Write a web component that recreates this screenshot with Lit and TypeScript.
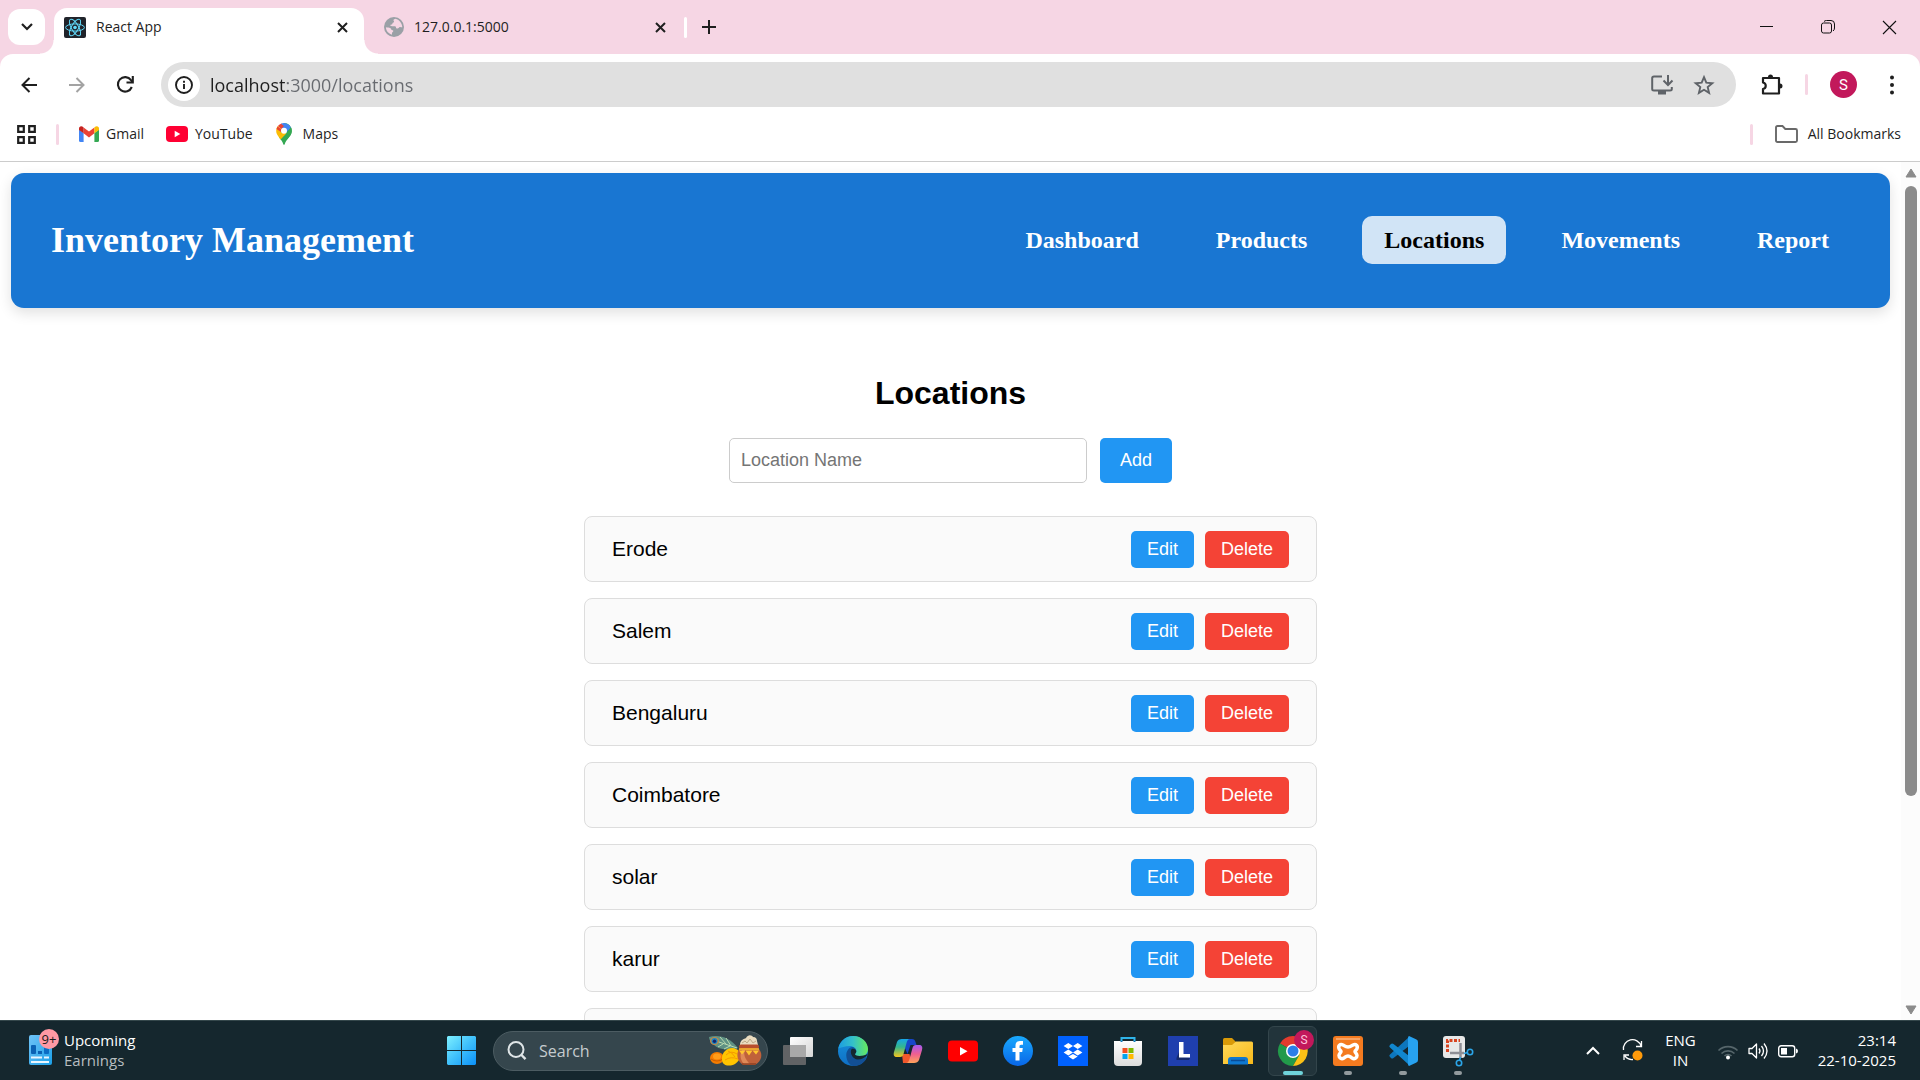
import { LitElement, html, css, svg, nothing } from "lit";
import { customElement, property, state } from "lit/decorators.js";
import { classMap } from "lit/directives/class-map.js";

const icon = (w: number, h: number, body: unknown, box = `0 0 ${w} ${h}`) =>
  html`<svg width=${w} height=${h} viewBox=${box} fill="none" aria-hidden="true">${body}</svg>`;

const closeIcon = icon(11, 11, svg`<path d="M1 1l9 9M10 1l-9 9" stroke="#1f1f1f" stroke-width="2"/>`);

const reactIcon = icon(22, 21, svg`
  <rect width="22" height="21" rx="2" fill="#20232a"/>
  <g stroke="#61dafb" stroke-width="1">
    <ellipse cx="11" cy="10.5" rx="9.4" ry="3.6"/>
    <ellipse cx="11" cy="10.5" rx="9.4" ry="3.6" transform="rotate(60 11 10.5)"/>
    <ellipse cx="11" cy="10.5" rx="9.4" ry="3.6" transform="rotate(120 11 10.5)"/>
  </g><circle cx="11" cy="10.5" r="1.8" fill="#61dafb"/>`);

const globeIcon = icon(20, 20, svg`
  <circle cx="10" cy="10" r="10" fill="#9aa0a6"/>
  <path d="M11.5 1.8c-2.2.3-2.4 1.6-1.6 2.4.5.7-.2 1.4-1 1.5-.6.2-.3 1.1-.8 1.6-.6.5-1.6.2-1.7 1 0 .7.7.9 1.5.9h3c1 0 1.100.9 1.100 1.600 0 .9 1.400.6 2.100.4.8-.1.8-1 1.700-1.200.9-.2 1.800.5 2.500.2-.2-4-3.200-7.700-6.800-8.400zM1.900 10.300c1.300.2 3.300.2 4.600.900 1 .6.5 1.500 1.300 1.800.8.2 1.500.2 1.500 1 0 .900-1 .900-1.200 1.700-.2.800-.2 1.400-.1 2-3.400-.9-6-3.900-6.100-7.400z" fill="#f6d6e4"/>`);

const gmailIcon = icon(20, 16, svg`
  <path d="M0 3.500V14.500Q0 16 1.500 16H4.600V7z" fill="#4285f4"/>
  <path d="M20 3.500V14.500Q20 16 18.500 16H15.400V7z" fill="#34a853"/>
  <path d="M4.600 1.500L10 5.600l5.400-4.100v5.800L10 11.400 4.600 7.300z" fill="#ea4335"/>
  <path d="M0 2.600C0 .3 2.500-.7 4.600 1.500v5.800L0 4z" fill="#c5221f"/>
  <path d="M20 2.600C20 .3 17.500-.7 15.400 1.500v5.800L20 4z" fill="#fbbc04"/>`);

const youtubeSmall = icon(22, 16, svg`
  <rect width="22" height="16" rx="4" fill="#ff0033"/><path d="M8.700 4.800v6.400l5.600-3.200z" fill="#fff"/>`);

const mapsIcon = icon(16, 22, svg`
  <path d="M8 0a7.800 7.800 0 0 1 7.800 8c0 2.700-1.300 4.500-2.900 6.500C11 17 9.300 18.500 8.700 21.300c-.2.700-1.200.7-1.400 0C6.700 18.500 5 17 3.100 14.500z" fill="#34a853"/>
  <path d="M2.400 13.500C1 11.600.2 10 .2 8c0-1.900.6-3.500 1.700-4.900L5.800 6.300a3 3 0 0 0 .5 4.100z" fill="#fbbc04"/>
  <path d="M6 10L12.300 1.500 15 4.700 9.500 10.500z" fill="#4285f4"/>
  <path d="M5.600 6.200L1.900 3.100A7.800 7.800 0 0 1 5.600.6l3.900 3.200z" fill="#ea4335"/>
  <path d="M5 .700A7.800 7.800 0 0 1 14.600 3.900L10.500 8.500 5.600 5.500 8 3z" fill="#4285f4"/>
  <path d="M10.200 10.300l4.700-6c1.400 2.700 1.100 5.500-.6 8.200L9.500 18 4.500 16l1.500-2z" fill="#34a853"/>
  <path d="M10.500 10.200L4.600 16.400 2.400 13.500 6 9.600z" fill="#fbbc04"/>
  <path d="M5.600 6.500L1.600 3.500A7.800 7.800 0 0 0 .5 6l4.500 3z" fill="#ea4335"/>
  <circle cx="8" cy="7.800" r="3" fill="#fff"/>`);

const widgetIcon = icon(32, 46, svg`
  <defs><linearGradient id="wg" x2="1" y2="1"><stop stop-color="#6fc3f7"/><stop offset="1" stop-color="#1ba0e8"/></linearGradient></defs>
  <rect x="0" y="7" width="23" height="30" rx="2" fill="url(#wg)"/>
  <rect x="2" y="17" width="5" height="9" rx="1" fill="#0a62b4"/><rect x="9" y="23" width="4" height="3" fill="#0a62b4"/>
  <rect x="15" y="18" width="5" height="8" rx="1" fill="#0b6dc4"/>
  <path d="M2 29.500h11M15 29.500h5M2 34h18" stroke="#e9f6ff" stroke-width="2"/>
  <circle cx="20" cy="11" r="10" fill="#ff99a4"/>
  <text x="20" y="16" text-anchor="middle" font-family="Open Sans, sans-serif" font-size="13" fill="#1a1a1a">9+</text>`);

const startIcon = icon(29, 29, svg`
  <defs><linearGradient id="st" gradientUnits="userSpaceOnUse" x1="0" y1="0" x2="29" y2="29"><stop stop-color="#7ef0ff"/><stop offset=".5" stop-color="#3fc0fb"/><stop offset="1" stop-color="#0b90f8"/></linearGradient></defs>
  <path d="M1 0h13v14H0V1zM15 0h13l1 1v13H15zM0 15h14v14H1l-1-1zM15 15h14v13l-1 1H15z" fill="url(#st)"/>`);

const searchIcon = icon(20, 20, svg`
  <circle cx="9" cy="8.500" r="7.500" stroke="#dfe5e7" stroke-width="2"/><path d="M14 13.500l4.500 4.700" stroke="#dfe5e7" stroke-width="2.400"/>`);

const festivalIcon = icon(54, 32, svg`
  <path d="M1 2C10-1 22 2 30 13c-8 3-20 2-25-4C3 7 1 5 1 2z" fill="#5f9184"/>
  <path d="M5 5l24 8M12 2l6 7M18 3l5 8M10 12l5-3M16 14l6-3" stroke="#b9d9b0" stroke-width="1"/>
  <ellipse cx="6.500" cy="6" rx="4.500" ry="4" fill="#c08a4a"/><circle cx="6.500" cy="6" r="3" fill="#1b86c4"/><circle cx="6.500" cy="6.200" r="1.700" fill="#12246e"/>
  <ellipse cx="9" cy="23" rx="7" ry="6" fill="#f57c00"/><ellipse cx="9" cy="21.500" rx="4" ry="3" fill="#ff9c1a"/><path d="M3 24q6 4 12 0" stroke="#c95c00" stroke-width="1"/>
  <path d="M14 23c0-3 1-5 3-7 3-3 8-4 11-2 3 1 4 4 4 7s-2 6-5 8c-4 2-9 2-11 0-2-1-2-4-2-6z" fill="#ffc400"/>
  <path d="M18 20q5-5 11-1M17 25q6-4 13-1M20 16q4 1 7 6" stroke="#f59a00" stroke-width="1"/>
  <path d="M32 10C32 5 36 4 38 3c2-4 6-3 7-1 3 0 4 2 4 4l1 4z" fill="#e9dcc0"/>
  <path d="M34 8l3-2 2 2 3-4 3 4 3-2" stroke="#bca986" stroke-width="1"/>
  <path d="M31 14c-3 5-2 12 4 16h12c7-4 8-11 4-16z" fill="#c0613a"/><path d="M34 15c-3 5-1 11 2 14h6c-5-5-7-10-5-14z" fill="#e08a58"/>
  <rect x="31" y="9.500" width="20" height="4.500" rx="2" fill="#b94f2c"/><path d="M31 14h20" stroke="#ffc62e" stroke-width="1.400"/>
  <path d="M31 15.500l3 4 3.500-4 3.500 5 3.500-5 3.500 4 3-4z" fill="#ffc62e"/><path d="M34 29h14" stroke="#8d3f22" stroke-width="1.400"/>`);

const taskIcons = {
  taskview: icon(30, 30, svg`
    <defs><linearGradient id="tv" x2="1" y2="1"><stop stop-color="#fff"/><stop offset="1" stop-color="#d5d5d5"/></linearGradient></defs>
    <rect x="7" y="1" width="23" height="20" rx="1" fill="url(#tv)"/><rect x="0" y="9" width="23" height="20" rx="1" fill="#6e6e6e" opacity=".85"/><rect x="7" y="9" width="16" height="12" fill="#a9a9a9"/>`),
  edge: icon(30, 30, svg`
    <defs>
      <linearGradient id="ea" x1="0" y1=".5" x2="1" y2=".5"><stop stop-color="#1b9de2"/><stop offset=".5" stop-color="#35c1c8"/><stop offset="1" stop-color="#66eb5c"/></linearGradient>
      <linearGradient id="eb" x2="0" y2="1"><stop stop-color="#1792dd"/><stop offset="1" stop-color="#0f6fc4"/></linearGradient>
    </defs>
    <circle cx="15" cy="15" r="15" fill="url(#eb)"/>
    <path d="M10 21c-3-9 4-12 7-9l12 9c-2 5-7 9-14 9-3-1-4-4-5-9z" fill="#0e57a0"/>
    <path d="M0.300 12.500C2 5 8 0 15 0c9 0 15 6.500 15 13 0 5-4 7.500-8 7.500-3 0-5-1-5-2.200 0-.8 1.300-1.500 1.300-3.300 0-2.600-2.800-5-6.300-5C7 10 2.500 11.500.3 12.500z" fill="url(#ea)"/>
    <path d="M13.500 13c-2.500 4 0 11 7.500 11 4 0 6.800-2 7.500-1.500-3 5-7.500 7.500-13 7.500C9 29 7 19 9 15.500c1-1.800 2.800-3 4.500-2.500z" fill="#124f94"/>
    <path d="M17 18.300c0-.8 1.300-1.500 1.300-3.300-1-2.300-3.500-2.800-4.800-1.800-1.500 2.500-.5 7.500 4 9.800 4 1.500 8-.5 11-3l1.500-2.500c-5 3.500-13 2.800-13 .8z" fill="#15272e"/>`),
  copilot: icon(30, 30, svg`
    <defs>
      <linearGradient id="ca" x2="0" y2="1"><stop stop-color="#16a6e8"/><stop offset=".45" stop-color="#35b78b"/><stop offset="1" stop-color="#f6c51c"/></linearGradient>
      <linearGradient id="cb" x2="0" y2="1"><stop stop-color="#a55af2"/><stop offset=".5" stop-color="#ef5f90"/><stop offset="1" stop-color="#ffa35a"/></linearGradient>
    </defs>
    <path d="M8 3h11c2 0 3 1 3.500 3l1 3h-6l-3 9z" fill="#1746c8"/>
    <path d="M10 27h11c-3 0-3-2-3.500-5l-1-4H9z" fill="#f0582c"/>
    <path d="M9 3h8c-2 0-3 2-3.500 4l-3 11c-.5 2-1.500 3-3.500 3H4c-3 0-3.800-2-3-5L4 6c.8-2 2.500-3 5-3z" fill="url(#ca)"/>
    <path d="M21 27h-8c2 0 3-2 3.500-4l3-11c.5-2 1.500-3 3.500-3h3c3 0 3.800 2 3 5l-3 10c-.8 2-2.500 3-5 3z" fill="url(#cb)"/>`),
  youtube: icon(30, 30, svg`<rect y="4.500" width="30" height="21" rx="4" fill="#f00"/><path d="M12 11v8.500l7.500-4.200z" fill="#fff"/>`),
  facebook: icon(30, 30, svg`
    <defs><linearGradient id="fb" x2="0" y2="1"><stop stop-color="#19a9fd"/><stop offset="1" stop-color="#0866e8"/></linearGradient></defs>
    <circle cx="15" cy="15" r="15" fill="url(#fb)"/><path d="M12.500 24.500V16H9.500v-4h3v-2.500C12.500 6.800 14.200 5 17 5h3v3.800h-1.800c-1.400 0-1.700.7-1.700 1.700V12h3.300l-.6 4h-2.700v8.500z" fill="#fff"/>`),
  dropbox: icon(30, 30, svg`<rect width="30" height="30" fill="#0061fe"/>
    <path d="M10.300 7l4.700 3-4.700 3-4.700-3zM19.700 7l4.700 3-4.700 3-4.700-3zM10.300 13.500l4.700 3-4.700 3-4.700-3zM19.700 13.500l4.700 3-4.700 3-4.700-3zM15 18l4.700 2.500L15 23.500l-4.700-3z" fill="#fff"/>`),
  store: icon(30, 30, svg`
    <defs><linearGradient id="ms" x2="0" y2="1"><stop stop-color="#fff"/><stop offset="1" stop-color="#dcdcdc"/></linearGradient></defs>
    <path d="M8.500 7V2h13v5" stroke="#2fb4e9" stroke-width="2"/><path d="M1 5h28v21q0 4-4 4H5q-4 0-4-4z" fill="url(#ms)"/><path d="M8.500 5v1M21.500 5v1" stroke="#1478b8" stroke-width="2"/>
    <rect x="9.500" y="12" width="5" height="5" fill="#f25022"/><rect x="15.500" y="12" width="5" height="5" fill="#7fba00"/><rect x="9.500" y="18" width="5" height="5" fill="#00a4ef"/><rect x="15.500" y="18" width="5" height="5" fill="#ffb900"/>`),
  letter: icon(30, 30, svg`<rect width="30" height="30" fill="#1f3fae"/><path d="M8.500 22l2.500-6 1.500 4.500L22 22l-1 2H8.500z" fill="#152a6d"/><path d="M11 6h4.500v12H22v3.500H11z" fill="#fff"/>`),
  explorer: icon(30, 30, svg`
    <defs><linearGradient id="fx" x2="1" y2="1"><stop stop-color="#ffd95a"/><stop offset="1" stop-color="#f7b91a"/></linearGradient></defs>
    <path d="M0 3.500Q0 2 1.500 2H9l4 4v5H0z" fill="#d99a08"/><path d="M0 9h9l4-3.500h15.500Q30 5.500 30 7v21H0z" fill="url(#fx)"/>
    <path d="M5 28.500V24q0-3 3-3h14q3 0 3 3v4.500z" fill="#0f78d0"/><path d="M8 24.500h14" stroke="#0a4c96" stroke-width="1.500"/>`),
  chrome: icon(36, 36, svg`
    <path d="M15 21L2 13.500A15 15 0 0 1 28 13.500z" fill="#e33b2e"/>
    <path d="M15 21L2 13.500A15 15 0 0 0 15 36L21.500 24.700z" fill="#229a4a"/>
    <path d="M15 21V14h13A15 15 0 0 1 15 36l6.500-11.300z" fill="#fbc116"/>
    <circle cx="15" cy="21" r="7" fill="#fff"/><circle cx="15" cy="21" r="5.500" fill="#2b7de9"/>
    <circle cx="26" cy="10" r="10" fill="#c2185b"/><text x="26" y="14" text-anchor="middle" font-family="Roboto, sans-serif" font-size="12" fill="#ffc4da">S</text>`),
  xampp: icon(30, 30, svg`<rect width="30" height="30" rx="3" fill="#f47b20"/><path d="M3 3h24" stroke="#fbb27b" stroke-width="1.500"/>
    <path d="M10 9c-3-1.500-5 1-4 3.500.5 1.500 2 2 2 3s-2 2-2 4c0 2.500 2.500 4 5 2.500 1.500-1 2-2 4-2s2.500 1 4 2c2.500 1.500 5 0 5-2.500 0-2-2-3-2-4s1.500-1.500 2-3c1-2.500-1-5-4-3.500-1.500.8-2.500 2-5 2s-3.500-1.200-5-2z" stroke="#fff" stroke-width="3.500"/>`),
  vscode: icon(30, 30, svg`
    <path d="M21 1l-19 17.500q-1.500 1 0 2.500l1 1q1 1 2.500 0L23 8.500z" fill="#0d76bd"/>
    <path d="M21 29L2 11.500q-1.500-1.300 0-2.500l1-1q1-1 2.500 0L23 21.500z" fill="#1187cf"/>
    <path d="M21 0l7 3.200q2 .8 2 2.800v18q0 2-2 2.800L21 30q-1-.5-1-2V2q0-1.500 1-2z" fill="#27a2f0"/>`),
  snip: icon(30, 30, svg`
    <rect width="22" height="22" rx="3" fill="#e8e8e8"/><path d="M4.500 16V4.500H17" stroke="#d8431f" stroke-width="3" stroke-dasharray="3 1.500"/>
    <path d="M7 17h14M17.500 7v15" stroke="#8f8f96" stroke-width="2.500"/><circle cx="27" cy="16" r="2.700" stroke="#2ba5e8" stroke-width="1.600"/><circle cx="16" cy="27" r="2.700" stroke="#2ba5e8" stroke-width="1.600"/>
    <path d="M21 17.500l3.500-1M17.500 21l-1 3.500" stroke="#2ba5e8" stroke-width="1.600"/>`, "0 0 30 30"),
};

interface TaskApp { id: keyof typeof taskIcons; label: string; open?: "idle" | "active"; }

const taskApps: TaskApp[] = [
  { id: "taskview", label: "Task view" }, { id: "edge", label: "Edge" }, { id: "copilot", label: "Copilot" },
  { id: "youtube", label: "YouTube" }, { id: "facebook", label: "Facebook" }, { id: "dropbox", label: "Dropbox" },
  { id: "store", label: "Store" }, { id: "letter", label: "L" }, { id: "explorer", label: "File Explorer" },
  { id: "chrome", label: "Chrome", open: "active" }, { id: "xampp", label: "XAMPP", open: "idle" },
  { id: "vscode", label: "Code", open: "idle" }, { id: "snip", label: "Snipping Tool", open: "idle" },
];

const reset = css`
  :host, * { box-sizing: border-box; }
  button, input { font: inherit; color: inherit; border: 0; background: none; padding: 0; margin: 0; outline: none; }
  button { display: flex; align-items: center; justify-content: center; cursor: pointer; }
  a { color: inherit; text-decoration: none; }
  svg { display: block; flex: none; overflow: visible; }
`;

@customElement("browser-chrome")
class BrowserChrome extends LitElement {
  static styles = [reset, css`
    :host { display: block; background: #f6d6e4; color: #1f1f1f; font: 14px/20px "Open Sans", "Noto Sans", sans-serif; }
    .strip { display: flex; align-items: center; height: 54px; padding: 0 20px 0 8px; }
    .menu { width: 37px; height: 36px; border-radius: 12px; background: #fff; margin-right: 9px; }
    .tab { display: flex; align-items: center; width: 310px; height: 38px; padding: 0 16px 0 10px; gap: 10px; }
    .tab.active { position: relative; align-self: flex-end; height: 46px; padding-bottom: 8px; background: #fff; border-radius: 13px 13px 0 0; }
    .tab.active::before, .tab.active::after { content: ""; position: absolute; bottom: 0; width: 14px; height: 14px; }
    .tab.active::before { right: 100%; background: radial-gradient(circle at 0 0, transparent 13px, #fff 14px); }
    .tab.active::after { left: 100%; background: radial-gradient(circle at 100% 0, transparent 13px, #fff 14px); }
    .tab.idle { margin-left: 10px; padding-right: 18px; }
    .title { flex: 1; }
    .rule { width: 3px; height: 21px; border-radius: 2px; background: #f6d6e4; }
    .rule.light { background: #fff; }
    .new { width: 44px; height: 36px; }
    .window { display: flex; margin-left: auto; }
    .window button { width: 61px; height: 36px; }
    .window button:last-child { width: 22px; margin-left: 20px; }
    .bar { display: flex; align-items: center; background: #fff; border-radius: 13px 13px 0 0; padding: 8px 0 9px 5px; }
    .bar > button { width: 48px; height: 36px; }
    .omni { display: flex; align-items: center; flex: 1; height: 45px; margin-left: 12px; padding: 0 20px 0 7px; border-radius: 23px; background: #e0e0e0; }
    .info { width: 32px; height: 32px; border-radius: 50%; background: #fff; margin-right: 10px; }
    .url { flex: 1; min-width: 0; height: 30px; font-size: 18px; color: transparent; background: linear-gradient(90deg, #1f1f1f 77px, #686b70 77px); -webkit-background-clip: text; background-clip: text; }
    .omni .act { width: 24px; height: 24px; margin-left: 18px; }
    .tools { display: flex; align-items: center; padding: 0 26px 0 25px; }
    .avatar { width: 27px; height: 27px; border-radius: 50%; background: #c2185b; color: #fff; font-family: Roboto, sans-serif; font-size: 15px; margin: 0 33px 0 22px; }
    .tools .rule { margin-left: 22px; }
    .marks { display: flex; align-items: center; height: 46px; background: #fff; border-bottom: 1px solid #ccc; padding: 0 19px 9px 17px; }
    .marks a { display: flex; align-items: center; gap: 7px; margin-right: 22px; }
    .marks a.maps { gap: 11px; margin-left: 1px; }
    .marks .rule { margin: 0 20px; }
    .marks .rule.far { margin-left: auto; margin-right: 22px; }
    .marks .all { gap: 10px; }
  `];

  render() {
    return html`
      <div class="strip">
        <button class="menu" aria-label="Search tabs">${icon(12, 8, svg`<path d="M1 1l5 5 5-5" stroke="#1f1f1f" stroke-width="2.200"/>`)}</button>
        <div class="tab active">${reactIcon}<span class="title">React App</span><button aria-label="Close tab">${closeIcon}</button></div>
        <div class="tab idle">${globeIcon}<span class="title">127.0.0.1:5000</span><button aria-label="Close tab">${closeIcon}</button></div>
        <span class="rule light"></span>
        <button class="new" aria-label="New tab">${icon(14, 14, svg`<path d="M7 0v14M0 7h14" stroke="#1f1f1f" stroke-width="2"/>`)}</button>
        <div class="window">
          <button aria-label="Minimize">${icon(13, 13, svg`<path d="M0 5.500h13" stroke="#111"/>`)}</button>
          <button aria-label="Restore">${icon(14, 14, svg`<rect x=".5" y="3" width="10" height="10" rx="2" stroke="#111"/><path d="M3 1.500Q4 .5 5.500.5H10q3.500 0 3.500 3.500v4q0 2-1.500 3" stroke="#111"/>`)}</button>
          <button aria-label="Close">${icon(13, 13, svg`<path d="M0 0l13 13M13 0L0 13" stroke="#111" stroke-width="1.100"/>`)}</button>
        </div>
      </div>
      <div class="bar">
        <button aria-label="Back">${icon(16, 16, svg`<path d="M16 8H1.500M8.500 1L1.500 8l7 7" stroke="#1f1f1f" stroke-width="2"/>`)}</button>
        <button aria-label="Forward">${icon(16, 16, svg`<path d="M0 8h14.500M7.500 1l7 7-7 7" stroke="#a3a3a3" stroke-width="2"/>`)}</button>
        <button aria-label="Reload">${icon(17, 17, svg`<path d="M14.800 11A7.200 7.200 0 1 1 14 4.200l1.500 2" stroke="#1f1f1f" stroke-width="2.100"/><path d="M15.800 0v6.500H9.500" stroke="#1f1f1f" stroke-width="2.100"/>`)}</button>
        <div class="omni">
          <button class="info" aria-label="Site information">${icon(18, 18, svg`<circle cx="9" cy="9" r="8" stroke="#1f1f1f" stroke-width="1.900"/><path d="M9 8v5M9 4.700v2" stroke="#1f1f1f" stroke-width="1.900"/>`)}</button>
          <input class="url" aria-label="Address" spellcheck="false" .value=${"localhost:3000/locations"} />
          <button class="act" aria-label="Install">${icon(22, 20, svg`<path d="M11 1.500H3Q1.200 1.500 1.200 3v11q0 1.500 1.800 1.500h16q1.800 0 1.800-1.500v-2" stroke="#5f6368" stroke-width="2"/><path d="M7 16h8v3.500H7z" fill="#5f6368"/><path d="M17 0v9M12.500 5.500L17 10l4.500-4.500" stroke="#5f6368" stroke-width="2"/>`)}</button>
          <button class="act" aria-label="Bookmark">${icon(20, 20, svg`<path d="M10 2.200l2.300 5.500 6 .5-4.600 3.900 1.400 5.800L10 14.800l-5.100 3.100 1.400-5.800L1.700 8.200l6-.5z" stroke="#5f6368" stroke-width="1.900"/>`)}</button>
        </div>
        <div class="tools">
          <button aria-label="Extensions">${icon(22, 22, svg`<path d="M2 4h16v15.500H2v-4.500a3.300 3.300 0 0 0 0-6.500z" stroke="#1f1f1f" stroke-width="2.200" stroke-linejoin="round"/><path d="M7 3a2.500 2.500 0 0 1 5 0zM19 9.500a2.500 2.500 0 0 1 0 5z" fill="#1f1f1f"/>`)}</button>
          <span class="rule"></span>
          <button class="avatar" aria-label="Profile">S</button>
          <button aria-label="Menu">${icon(4, 20, svg`<g fill="#1f1f1f"><circle cx="2" cy="2.500" r="2"/><circle cx="2" cy="10" r="2"/><circle cx="2" cy="17.500" r="2"/></g>`)}</button>
        </div>
      </div>
      <nav class="marks" aria-label="Bookmarks">
        <button aria-label="Apps">${icon(19, 19, svg`<path d="M1.200 1.200h5.600v5.600H1.200zM12.200 1.200h5.600v5.600h-5.600zM1.200 12.200h5.600v5.600H1.200zM12.200 12.200h5.600v5.600h-5.600z" stroke="#1f1f1f" stroke-width="2.200"/>`)}</button>
        <span class="rule"></span>
        <a href="#gmail">${gmailIcon}Gmail</a>
        <a href="#youtube">${youtubeSmall}YouTube</a>
        <a class="maps" href="#maps">${mapsIcon}Maps</a>
        <span class="rule far"></span>
        <button class="all">${icon(23, 18, svg`<path d="M1 2.500Q1 1 2.500 1h5L10.300 4h10.200Q22 4 22 5.500v10q0 1.500-1.500 1.500h-18Q1 17 1 15.500z" stroke="#696969" stroke-width="1.900"/>`)}All Bookmarks</button>
      </nav>`;
  }
}

@customElement("inventory-page")
class InventoryPage extends LitElement {
  @property() active = "Locations";
  @state() private draft = "";
  @state() private locations = ["Erode", "Salem", "Bengaluru", "Coimbatore", "solar", "karur", ""];
  private links = ["Dashboard", "Products", "Locations", "Movements", "Report"];

  static styles = [reset, css`
    :host { display: block; padding: 11px; color: #000; font: 18px/21px "Liberation Sans", Arial, sans-serif; }
    .header { display: flex; align-items: center; justify-content: space-between; padding: 43px 39px 44px 40px; border-radius: 13px; background: #1976d2; color: #fff; box-shadow: 0 5px 14px rgba(0, 0, 0, 0.12); font-family: "Liberation Serif", "Times New Roman", serif; font-weight: bold; }
    .brand { margin: 0; font-size: 36px; line-height: 40px; }
    .nav { display: flex; gap: 33px; font-size: 24px; line-height: 28px; }
    .link { padding: 10px 22px; border-radius: 10px; }
    .link.on { background: #d1e4f6; color: #000; }
    .body { max-width: 733px; margin: 67px auto 0; }
    h2 { margin: 0 0 26px; text-align: center; font-size: 32px; line-height: 37px; }
    .form { display: flex; justify-content: center; gap: 13px; margin-bottom: 33px; }
    .form input { width: 358px; height: 45px; padding: 0 11px; border: 1px solid #ccc; border-radius: 5px; background: #fff; }
    .form input::placeholder { color: #757575; opacity: 1; }
    .btn { height: 37px; padding: 0 16px; border-radius: 5px; background: #2196f3; color: #fff; }
    .btn.add { height: 45px; padding: 0 20px; }
    .btn.del { background: #f44336; }
    .list { display: grid; gap: 16px; margin: 0; padding: 0; list-style: none; }
    .item { display: flex; align-items: center; gap: 11px; min-height: 66px; padding: 0 27px; border: 1px solid #ddd; border-radius: 8px; background: #fafafa; }
    .name { flex: 1; font-size: 21px; line-height: 24px; }
  `];

  private add() {
    if (this.draft) this.locations = [...this.locations.filter(Boolean), this.draft];
    this.draft = "";
  }

  private remove(name: string) {
    this.locations = this.locations.filter((l) => l !== name);
  }

  render() {
    return html`
      <header class="header">
        <h1 class="brand">Inventory Management</h1>
        <nav class="nav">${this.links.map((l) => html`<a href="#${l}" class=${classMap({ link: true, on: l === this.active })}>${l}</a>`)}</nav>
      </header>
      <main class="body">
        <h2>Locations</h2>
        <div class="form">
          <input aria-label="Location Name" placeholder="Location Name" .value=${this.draft} @input=${(e: Event) => (this.draft = (e.target as HTMLInputElement).value)} />
          <button class="btn add" @click=${this.add}>Add</button>
        </div>
        <ul class="list">
          ${this.locations.map((l) => html`<li class="item">
            ${l ? html`<span class="name">${l}</span><button class="btn">Edit</button><button class="btn del" @click=${() => this.remove(l)}>Delete</button>` : nothing}
          </li>`)}
        </ul>
      </main>`;
  }
}

@customElement("task-bar")
class TaskBar extends LitElement {
  static styles = [reset, css`
    :host { display: grid; grid-template-columns: 434px 1fr auto; align-items: center; height: 60px; border-top: 1px solid #34474b; background: #15272e; color: #fff; font: 15px/20px "Open Sans", "Noto Sans", sans-serif; }
    .widget { justify-self: start; gap: 3px; padding-left: 29px; text-align: left; }
    .sub { color: #b7bec0; }
    .line { display: block; }
    .pair { display: block; padding-bottom: 2px; }
    .apps { display: flex; align-items: center; }
    .app { position: relative; width: 55px; height: 50px; }
    .app.active::before { content: ""; position: absolute; inset: 0 3px; border: 1px solid #33454b; border-radius: 6px; background: #22343b; }
    .app.active svg { position: relative; margin: -6px 0 0 6px; }
    .app.idle::after, .app.active::after { content: ""; position: absolute; bottom: 1px; left: 50%; width: 8px; height: 4px; margin-left: -4px; border-radius: 2px; background: #929a9d; }
    .app.active::after { width: 20px; margin-left: -10px; background: #6fd3da; }
    .search { display: flex; align-items: center; width: 275px; height: 40px; margin: 0 2px 0 4px; padding: 0 5px 0 13px; border: 1px solid #4c5c62; border-radius: 20px; background: #35464d; }
    .search input { flex: 1; min-width: 0; margin-left: 12px; font-size: 16px; }
    .search input::placeholder { color: #c5cccf; opacity: 1; }
    .tray { display: flex; align-items: center; padding-right: 24px; }
    .sync { margin: 0 22px; }
    .lang { text-align: center; margin-right: 22px; }
    .status { gap: 10px; margin-right: 20px; }
    .clock { text-align: right; }
  `];

  render() {
    return html`
      <button class="widget">${widgetIcon}<span class="pair"><span class="line">Upcoming</span><span class="line sub">Earnings</span></span></button>
      <div class="apps">
        <button class="app" aria-label="Start">${startIcon}</button>
        <label class="search">${searchIcon}<input aria-label="Search" placeholder="Search" />${festivalIcon}</label>
        ${taskApps.map((a) => html`<button class=${classMap({ app: true, idle: a.open === "idle", active: a.open === "active" })} aria-label=${a.label}>${taskIcons[a.id]}</button>`)}
      </div>
      <div class="tray">
        <button aria-label="Hidden icons">${icon(14, 9, svg`<path d="M1 8l6-6 6 6" stroke="#fff" stroke-width="2"/>`)}</button>
        <button class="sync" aria-label="Update">${icon(21, 21, svg`<path d="M1.500 10A9 9 0 0 1 19 6M19.500 1v5.500H14M2 20v-5h5M3 16q3 4 8 3.500" stroke="#fff" stroke-width="1.300"/><circle cx="15.500" cy="15.500" r="5" fill="#ff9a0a"/>`)}</button>
        <button class="lang pair"><span class="line">ENG</span><span class="line">IN</span></button>
        <button class="status" aria-label="Network, volume and battery">
          ${icon(20, 20, svg`<g stroke="#56666b" stroke-width="1.600"><path d="M.5 9.500a13.500 13.500 0 0 1 19 0M3.500 12.500a9.300 9.300 0 0 1 13 0M6.500 15a5 5 0 0 1 7 0"/></g><circle cx="10" cy="16.500" r="2" fill="#fff"/>`)}
          ${icon(20, 18, svg`<path d="M1 6.500h3L8.500 2v14L4 11.500H1z" stroke="#fff" stroke-width="1.300" stroke-linejoin="round"/><path d="M11 6.500q2 2.500 0 5M13.500 4q4 5 0 10M16 1.500q6 7.500 0 15" stroke="#fff" stroke-width="1.300"/>`)}
          ${icon(20, 12, svg`<rect x=".7" y=".7" width="16" height="11" rx="2.500" stroke="#fff" stroke-width="1.400"/><rect x="3" y="3" width="6" height="6.500" fill="#fff"/><path d="M18 3.500q2 .5 2 2.500t-2 2.500z" fill="#fff"/>`)}
        </button>
        <button class="clock pair"><span class="line">23:14</span><span class="line">22-10-2025</span></button>
      </div>`;
  }
}

@customElement("app-root")
class AppRoot extends LitElement {
  static styles = [reset, css`
    :host { display: grid; grid-template-rows: auto minmax(0, 1fr) auto; height: 100vh; background: #fff; }
    .view { display: grid; grid-template-columns: minmax(0, 1fr) 19px; min-height: 0; overflow: hidden; }
    .content { overflow: hidden; }
    .track { display: flex; flex-direction: column; align-items: center; padding: 6px 0 5px; background: #fcfcfc; }
    .thumb { width: 12px; height: 72%; margin: 8px 0 auto; border-radius: 6px; background: #8b8b8b; }
  `];

  render() {
    return html`
      <browser-chrome></browser-chrome>
      <div class="view">
        <div class="content"><inventory-page></inventory-page></div>
        <div class="track" aria-hidden="true">
          ${icon(12, 10, svg`<path d="M6 1l5 8H1z" fill="#8b8b8b" stroke="#8b8b8b" stroke-linejoin="round"/>`)}
          <span class="thumb"></span>
          ${icon(12, 10, svg`<path d="M6 9l5-8H1z" fill="#8b8b8b" stroke="#8b8b8b" stroke-linejoin="round"/>`)}
        </div>
      </div>
      <task-bar></task-bar>`;
  }
}
